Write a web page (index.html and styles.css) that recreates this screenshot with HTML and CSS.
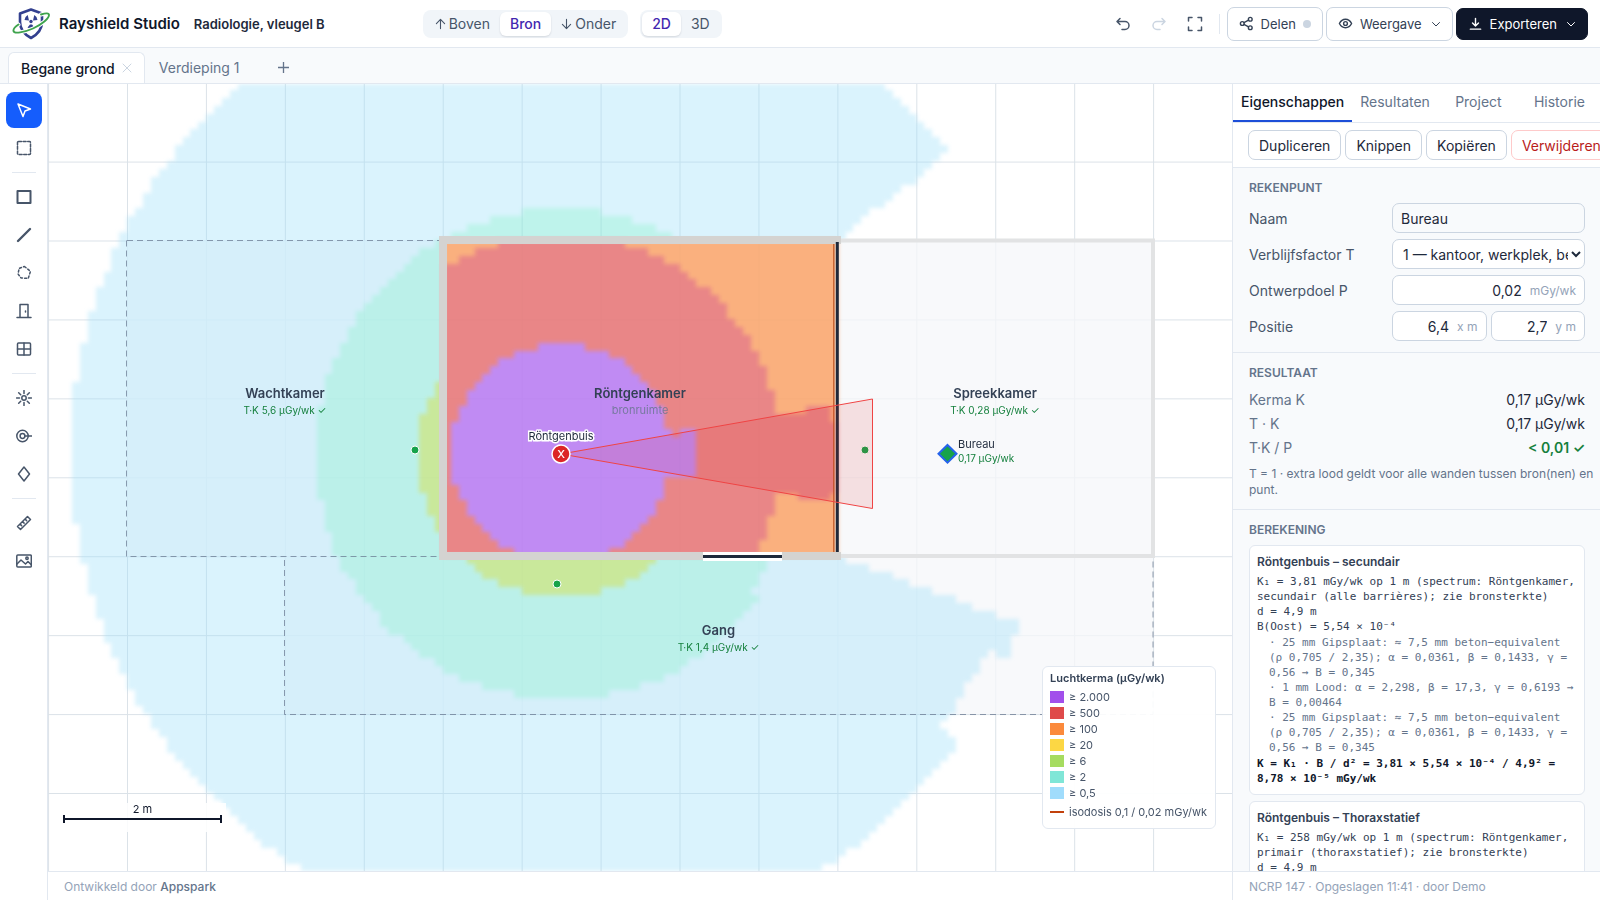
FILE: index.html
```html
<!DOCTYPE html>
<html lang="nl">
<head>
<meta charset="utf-8">
<title>Rayshield Studio</title>
<link rel="stylesheet" href="styles.css">
</head>
<body>
<div class="app">
  <header class="topbar">
    <svg class="logo" viewBox="0 0 38 32" aria-hidden="true">
      <path d="M19 1.500 30 5.500V14c0 7.500-4.500 12.500-11 16C12.500 26.500 8 21.500 8 14V5.500Z" fill="#fff" stroke="#33408f" stroke-width="2.600" stroke-linejoin="round"/>
      <g fill="#33408f"><circle cx="19" cy="13.500" r="1.700"/><path d="M17 12.500 12.500 12a6.500 6.500 0 0 1 3.200-5Z"/><path d="M21 12.500 25.500 12a6.500 6.500 0 0 0-3.200-5Z"/><path d="M18 16.500h2l2.500 3a6.500 6.500 0 0 1-7 0Z"/></g>
      <path d="M29 6.500c5-1.600 8-1.600 8 .5 0 3.500-7 9.500-16 13.500S2 26 1.500 23c-.4-2 2-4.500 5-6.500" fill="none" stroke="#fff" stroke-width="4"/>
      <path d="M29 6.500c5-1.600 8-1.600 8 .5 0 3.500-7 9.500-16 13.500S2 26 1.500 23c-.4-2 2-4.500 5-6.500" fill="none" stroke="#3fa34d" stroke-width="1.900" stroke-linecap="round"/>
    </svg>
    <strong class="brand">Rayshield Studio</strong>
    <span class="project">Radiologie, vleugel B</span>
    <div class="segments">
      <div class="segment">
        <button><svg class="arrow" viewBox="0 0 12 12"><path d="M6 11V1M1.500 5.500 6 1l4.500 4.500"/></svg>Boven</button>
        <button class="on">Bron</button>
        <button><svg class="arrow" viewBox="0 0 12 12"><path d="M6 1v10M1.500 6.500 6 11l4.500-4.500"/></svg>Onder</button>
      </div>
      <div class="segment"><button class="on">2D</button><button>3D</button></div>
    </div>
    <div class="actions">
      <button class="icon-btn" aria-label="Ongedaan maken"><svg viewBox="0 0 16 16"><path d="M5 2.500 2 5.500l3 3M2.200 5.500H10a4 4 0 0 1 0 8H7"/></svg></button>
      <button class="icon-btn off" aria-label="Opnieuw"><svg viewBox="0 0 16 16"><path d="m11 2.500 3 3-3 3M13.800 5.500H6a4 4 0 0 0 0 8h3"/></svg></button>
      <button class="icon-btn" aria-label="Passend maken"><svg viewBox="0 0 16 16"><path d="M1.500 5V1.500H5M11 1.500h3.500V5M14.500 11v3.500H11M5 14.500H1.500V11"/></svg></button>
      <span class="divider"></span>
      <button class="btn"><svg viewBox="0 0 16 16"><circle cx="3.500" cy="8" r="2"/><circle cx="12" cy="3.500" r="2"/><circle cx="12" cy="12.500" r="2"/><path d="m5.300 7 4.900-2.600M5.300 9l4.900 2.600"/></svg>Delen<i class="status"></i></button>
      <button class="btn"><svg viewBox="0 0 16 16"><path d="M1.500 8C3 5 5.300 3.500 8 3.500S13 5 14.500 8C13 11 10.700 12.500 8 12.500S3 11 1.500 8Z"/><circle cx="8" cy="8" r="2"/></svg>Weergave<svg class="caret" viewBox="0 0 10 10"><path d="m1.500 3.500 3.500 3.500 3.500-3.500"/></svg></button>
      <button class="btn dark"><svg viewBox="0 0 16 16"><path d="M8 2.500v8M4.800 7.500 8 10.700l3.200-3.200M2.500 14h11"/></svg>Exporteren<svg class="caret" viewBox="0 0 10 10"><path d="m1.500 3.500 3.500 3.500 3.500-3.500"/></svg></button>
    </div>
  </header>

  <nav class="floors">
    <div class="floor on"><button>Begane grond</button><button class="close" aria-label="Sluiten"><svg viewBox="0 0 10 10"><path d="m1 1 8 8M9 1 1 9"/></svg></button></div>
    <div class="floor"><button>Verdieping 1</button></div>
    <button class="add" aria-label="Verdieping toevoegen"><svg viewBox="0 0 10 10"><path d="M5 0v10M0 5h10"/></svg></button>
  </nav>

  <div class="body">
    <aside class="tools">
      <button class="tool on" aria-label="Selecteren"><svg viewBox="0 0 16 16"><path d="m2 2 12.500 5-5.500 2-2 5.500Z"/></svg></button>
      <button class="tool" aria-label="Gebied"><svg viewBox="0 0 16 16"><rect x="1.500" y="1.500" width="13" height="13" rx="1" stroke-dasharray="3 1.600"/></svg></button>
      <hr>
      <button class="tool" aria-label="Ruimte"><svg viewBox="0 0 16 16"><rect x="1.500" y="2" width="13" height="12" stroke-width="2"/></svg></button>
      <button class="tool" aria-label="Wand"><svg viewBox="0 0 16 16"><path d="M2 14 14 2" stroke-width="2.400"/></svg></button>
      <button class="tool" aria-label="Veelhoek"><svg viewBox="0 0 16 16"><path d="m8.500 1.500 6 4.800-2.300 7.200-7.200-.6-3-4 1.200-5.600Z" stroke-dasharray="2 2.200"/></svg></button>
      <button class="tool" aria-label="Deur"><svg viewBox="0 0 16 16"><path d="M4 14.500v-13h8v13M1 14.500h14"/><path d="M9.500 8v1"/></svg></button>
      <button class="tool" aria-label="Raam"><svg viewBox="0 0 16 16"><rect x="1.500" y="2" width="13" height="12" rx="1"/><path d="M8 2v12M1.500 8h13"/></svg></button>
      <hr>
      <button class="tool" aria-label="Bron"><svg viewBox="0 0 16 16"><circle cx="8" cy="8" r="2.200"/><path d="M8 .5v3M8 12.500v3M.5 8h3M12.500 8h3M2.700 2.700l2 2M11.300 11.300l2 2M2.700 13.300l2-2M11.300 4.700l2-2"/></svg></button>
      <button class="tool" aria-label="CT"><svg viewBox="0 0 16 16"><circle cx="6.500" cy="8" r="5.700"/><circle cx="6.500" cy="8" r="2.400"/><path d="M9 8h7"/></svg></button>
      <button class="tool" aria-label="Rekenpunt"><svg viewBox="0 0 16 16"><path d="m8 1 5.500 7L8 15 2.500 8Z"/></svg></button>
      <hr>
      <button class="tool" aria-label="Meten"><svg viewBox="0 0 16 16"><path d="M1.500 11.500 11.500 1.500l3 3-10 10ZM4 9l1.600 1.600M6.500 6.500l1.600 1.600M9 4l1.600 1.600"/></svg></button>
      <button class="tool" aria-label="Achtergrond"><svg viewBox="0 0 16 16"><rect x=".8" y="2" width="14.500" height="12" rx="1"/><path d="m1 11 4-4 4.500 4L12 8.500l3 3"/><circle cx="11" cy="5.200" r="1.200"/></svg></button>
    </aside>

    <main class="work">
      <div class="plan">
        <svg class="layer" viewBox="48 84 1184 787" preserveAspectRatio="xMidYMid slice">
          <defs><pattern id="grid" x="127" y="240.500" width="78.930" height="78.930" patternUnits="userSpaceOnUse"><path d="M0 0V79M0 0H79" fill="none" stroke="#dbe2e8" stroke-width="2"/></pattern></defs>
          <rect x="48" y="84" width="1184" height="787" fill="url(#grid)"/>
          <g fill="#f5f7fa" fill-opacity=".75">
            <rect x="127" y="240.500" width="316" height="315.500"/>
            <rect x="443" y="240.500" width="394" height="315.500"/>
            <rect x="837" y="240.500" width="316" height="315.500"/>
            <rect x="284.500" y="556" width="868.500" height="158"/>
          </g>
        </svg>
        <canvas class="layer heat" id="heat" width="1184" height="787"></canvas>
        <svg class="layer" viewBox="48 84 1184 787" preserveAspectRatio="xMidYMid slice">
          <g fill="none" stroke="#64748b" stroke-opacity=".7" stroke-dasharray="6 4">
            <path d="M127 240.500H439M126.500 240.500V556.500H439"/>
            <path d="M284.500 560V714.500H1153V560"/>
          </g>
          <path d="M841 240.500h312v315.500H841" fill="none" stroke="#e2e3e4" stroke-width="4"/>
          <path d="M841 240H443v316h398" fill="none" stroke="#d4d3d1" stroke-width="8"/>
          <path d="M834 244v308" stroke="#b8501c" stroke-width="1.500"/>
          <path d="M835.200 244v308" stroke="#fbe3d0" stroke-width="1"/>
          <path d="M837.300 242v310" stroke="#1e293b" stroke-width="3"/>
          <rect x="703" y="552" width="79" height="9" fill="#fff"/>
          <path d="M703 556.500h79" stroke="#1e293b" stroke-width="3"/>
          <g fill="#16a34a" stroke="#fff" stroke-width="1"><circle cx="415" cy="450" r="4"/><circle cx="557" cy="584" r="4"/><circle cx="865" cy="450" r="4"/></g>
          <path d="M561 454 872.500 399v109.500Z" fill="#dc2626" fill-opacity=".12" stroke="#ef4444"/>
          <circle cx="561" cy="454" r="9" fill="#dc2626" stroke="#fff" stroke-width="1.500"/>
          <path d="m947.500 445 9 8.800-9 8.800-9-8.800Z" fill="#16a34a" stroke="#2563eb" stroke-width="2"/>
          <g class="names">
            <text x="285" y="398">Wachtkamer</text>
            <text x="640" y="398">Röntgenkamer</text>
            <text x="995" y="398">Spreekkamer</text>
            <text x="718.500" y="635">Gang</text>
          </g>
          <g class="doses">
            <text x="285" y="414">T·K 5,6 µGy/wk ✓</text>
            <text class="quiet" x="640" y="414">bronruimte</text>
            <text x="995" y="414">T·K 0,28 µGy/wk ✓</text>
            <text x="718.500" y="651">T·K 1,4 µGy/wk ✓</text>
          </g>
          <text class="src" x="561" y="440">Röntgenbuis</text>
          <text class="x" x="561" y="458">X</text>
          <text class="pt" x="958" y="448">Bureau</text>
          <text class="pt ok" x="958" y="462">0,17 µGy/wk</text>
        </svg>
        <div class="scale"><span>2 m</span><i></i></div>
        <div class="legend">
          <b>Luchtkerma (µGy/wk)</b>
          <ul>
            <li><i class="c7"></i>≥ 2.000</li><li><i class="c6"></i>≥ 500</li><li><i class="c5"></i>≥ 100</li><li><i class="c4"></i>≥ 20</li><li><i class="c3"></i>≥ 6</li><li><i class="c2"></i>≥ 2</li><li><i class="c1"></i>≥ 0,5</li>
            <li class="iso"><i></i>isodosis 0,1 / 0,02 mGy/wk</li>
          </ul>
        </div>
      </div>
      <footer class="foot">Ontwikkeld door&nbsp;<a href="#">Appspark</a></footer>
    </main>

    <aside class="panel">
      <nav class="tabs"><button class="on">Eigenschappen</button><button>Resultaten</button><button>Project</button><button>Historie</button></nav>
      <div class="ops"><button>Dupliceren</button><button>Knippen</button><button>Kopiëren</button><button class="danger">Verwijderen</button></div>
      <div class="scroll">
        <section>
          <h2>REKENPUNT</h2>
          <div class="field"><label for="naam">Naam</label><div class="box soft"><input id="naam" value="Bureau"></div></div>
          <div class="field"><label for="factor">Verblijfsfactor T</label><select id="factor"><option>1 — kantoor, werkplek, bediening</option></select></div>
          <div class="field"><label for="doel">Ontwerpdoel P</label><div class="box"><input class="num" id="doel" value="0,02"><span>mGy/wk</span></div></div>
          <div class="field"><label for="px">Positie</label><div class="pair"><div class="box"><input class="num" id="px" value="6,4"><span>x m</span></div><div class="box"><input class="num" aria-label="y" value="2,7"><span>y m</span></div></div></div>
        </section>
        <section>
          <h2>RESULTAAT</h2>
          <dl><div><dt>Kerma K</dt><dd>0,17 µGy/wk</dd></div><div><dt>T · K</dt><dd>0,17 µGy/wk</dd></div><div><dt>T·K / P</dt><dd class="ok">&lt; 0,01 ✓</dd></div></dl>
          <p class="note">T = 1 · extra lood geldt voor alle wanden tussen bron(nen) en punt.</p>
        </section>
        <section>
          <h2>BEREKENING</h2>
          <article class="calc">
            <h3>Röntgenbuis – secundair</h3>
            <p>K₁ = 3,81 mGy/wk op 1 m (spectrum: Röntgenkamer, secundair (alle barrières); zie bronsterkte)</p>
            <p>d = 4,9 m</p>
            <p>B(Oost) = 5,54 × 10⁻⁴</p>
            <div class="sub">
              <p>· 25 mm Gipsplaat: ≈ 7,5 mm beton−equivalent (ρ 0,705 / 2,35); α = 0,0361, β = 0,1433, γ = 0,56 → B = 0,345</p>
              <p>· 1 mm Lood: α = 2,298, β = 17,3, γ = 0,6193 → B = 0,00464</p>
              <p>· 25 mm Gipsplaat: ≈ 7,5 mm beton−equivalent (ρ 0,705 / 2,35); α = 0,0361, β = 0,1433, γ = 0,56 → B = 0,345</p>
            </div>
            <p class="total">K = K₁ · B / d² = 3,81 × 5,54 × 10⁻⁴ / 4,9² = 8,78 × 10⁻⁵ mGy/wk</p>
          </article>
          <article class="calc">
            <h3>Röntgenbuis – Thoraxstatief</h3>
            <p>K₁ = 258 mGy/wk op 1 m (spectrum: Röntgenkamer, primair (thoraxstatief); zie bronsterkte)</p>
            <p>d = 4,9 m</p>
          </article>
        </section>
      </div>
      <footer class="foot">NCRP 147 · Opgeslagen 11:41 · door Demo</footer>
    </aside>
  </div>
</div>
<script src="heat.js"></script>
</body>
</html>
```

FILE: heat.js
```js
// Draws the dose bands on a 0.1 m raster around the tube.
(function () {
  const canvas = document.getElementById('heat');
  const w = canvas.width, h = canvas.height;
  const raster = document.createElement('canvas');
  raster.width = w;
  raster.height = h;
  const pen = raster.getContext('2d');

  const cell = 7.893;
  const room = { l: 395, t: 156, r: 789, b: 472 };
  const src = { x: 513, y: 370 };
  const door = { from: 655, to: 734 };
  const colors = {
    purple: 'rgba(162,80,238,.65)',
    red: 'rgba(225,80,80,.68)',
    orange: 'rgba(251,138,60,.66)',
    green: 'rgba(170,220,92,.6)',
    teal: 'rgba(126,232,216,.5)',
    blue: 'rgba(158,224,250,.38)'
  };

  function band(x, y) {
    const dx = x - src.x, dy = y - src.y, d = Math.hypot(dx, dy);
    if (x > room.l && x < room.r && y > room.t && y < room.b) {
      const beam = dx > 0 && Math.abs(dy) < dx * 0.178;
      if (d < (beam ? 134 : 110)) return 'purple';
      if (d < (beam ? 275 : 219)) return 'red';
      return 'orange';
    }
    const tx = dx > 0 ? (room.r - src.x) / dx : (room.l - src.x) / dx;
    const ty = dy > 0 ? (room.b - src.y) / dy : (room.t - src.y) / dy;
    if (dx > 0 && tx < ty) return null;
    let loss = 1;
    if (dy > 0 && ty < tx) {
      const hit = src.x + dx * ty;
      if (hit > door.from && hit < door.to) loss = 0.955;
    }
    if (d < 143 * loss) return 'green';
    if (d < 245 * loss) return 'teal';
    if (d < 490 * loss) return 'blue';
    return null;
  }

  const ox = room.l % cell - cell, oy = room.t % cell - cell;
  for (let j = 0; oy + j * cell < h; j++) {
    for (let i = 0; ox + i * cell < w; i++) {
      const x = ox + i * cell, y = oy + j * cell;
      const name = band(x + cell / 2, y + cell / 2);
      if (!name) continue;
      pen.fillStyle = colors[name];
      const x0 = Math.round(x), y0 = Math.round(y);
      pen.fillRect(x0, y0, Math.round(x + cell) - x0, Math.round(y + cell) - y0);
    }
  }

  const out = canvas.getContext('2d');
  out.filter = 'blur(2px)';
  out.drawImage(raster, 0, 0);
})();
```

FILE: styles.css
```css
* { box-sizing: border-box; }
body { margin: 0; font-family: Inter, "Liberation Sans", sans-serif; font-size: 14px; color: #1e293b; background: #fff; }
button, input, select { font: inherit; color: inherit; }
button { background: none; border: 0; padding: 0; margin: 0; white-space: nowrap; }
svg { fill: none; stroke: currentColor; stroke-width: 1.5; stroke-linecap: round; stroke-linejoin: round; flex: none; }
h2, h3, p, dl, dd, ul { margin: 0; padding: 0; }
.app { height: 100vh; display: flex; flex-direction: column; overflow: hidden; }

.topbar { height: 48px; flex: none; display: flex; align-items: center; padding: 0 12px; border-bottom: 1px solid #e2e8f0; }
.logo { width: 38px; height: 32px; stroke: none; }
.brand { font-size: 15px; font-weight: 600; color: #0f172a; margin-left: 9px; white-space: nowrap; }
.project { font-size: 13px; font-weight: 600; margin-left: 14px; white-space: nowrap; }
.segments { display: flex; gap: 12px; margin-left: 98px; }
.segment { display: flex; background: #f1f5f9; border-radius: 8px; padding: 2px; height: 28px; color: #475569; }
.segment button { display: flex; align-items: center; gap: 3px; padding: 0 10px; border-radius: 6px; }
.segment .on { background: #fff; color: #4327b0; font-weight: 500; box-shadow: 0 1px 2px #0f172a22; }
.arrow { width: 11px; height: 12px; stroke-width: 1.2; }
.actions { margin-left: auto; display: flex; align-items: center; gap: 3px; color: #475569; }
.icon-btn { width: 32px; height: 32px; display: grid; place-items: center; margin-right: 1px; }
.icon-btn svg { width: 16px; height: 16px; }
.off { color: #cbd5e1; }
.divider { width: 1px; height: 20px; background: #e2e8f0; margin: 0 4px; }
.btn { display: flex; align-items: center; gap: 7px; height: 34px; padding: 0 11px; border: 1px solid #cbd5e1; border-radius: 7px; color: #334155; font-size: 13px; }
.btn svg { width: 15px; height: 15px; }
.btn .caret { width: 10px; height: 10px; margin-left: 2px; stroke-width: 1; }
.btn.dark { background: #0f172a; color: #fff; border-color: #0f172a; height: 32px; }
.status { width: 8px; height: 8px; border-radius: 50%; background: #cbd5e1; }

.floors { height: 36px; flex: none; display: flex; align-items: flex-end; padding-left: 8px; background: #f8fafc; border-bottom: 1px solid #e2e8f0; }
.floor { height: 31px; display: flex; align-items: center; gap: 7px; padding: 0 14px; color: #64748b; }
.floor.on { background: #fff; border: 1px solid #e2e8f0; border-bottom: 0; border-radius: 6px 6px 0 0; color: #0f172a; font-weight: 500; padding: 0 12px; }
.close svg { width: 10px; height: 10px; display: block; color: #cbd5e1; stroke-width: 1; }
.add { height: 31px; width: 32px; margin-left: 14px; display: grid; place-items: center; color: #64748b; }
.add svg { width: 11px; height: 11px; stroke-width: 1.2; }

.body { flex: 1; min-height: 0; display: flex; }
.tools { width: 48px; flex: none; border-right: 1px solid #e2e8f0; display: flex; flex-direction: column; align-items: center; gap: 2px; padding-top: 8px; color: #475569; }
.tool { width: 36px; height: 36px; border-radius: 8px; display: grid; place-items: center; }
.tool svg { width: 16px; height: 16px; }
.tool.on { background: #155dfc; color: #fff; }
.tools hr { width: 24px; height: 1px; border: 0; background: #e2e8f0; margin: 4px 0; }
.work { flex: 1; min-width: 0; display: flex; flex-direction: column; }
.plan { position: relative; flex: 1; min-height: 0; overflow: hidden; }
.layer { position: absolute; inset: 0; width: 100%; height: 100%; stroke: none; stroke-width: 1; stroke-linecap: butt; stroke-linejoin: miter; }
.heat { object-fit: cover; }
.foot { height: 29px; flex: none; border-top: 1px solid #e2e8f0; padding: 0 16px; display: flex; align-items: center; font-size: 12px; color: #94a3b8; background: #fff; }
.foot a { color: #64748b; font-weight: 500; text-decoration: none; }

.names text { font-size: 13px; font-weight: 600; fill: #334155; text-anchor: middle; }
.doses text { font-size: 10px; fill: #15803d; text-anchor: middle; }
.doses .quiet { font-size: 11px; fill: #64748b; fill-opacity: .8; }
.src { font-size: 11px; fill: #1e293b; text-anchor: middle; stroke: #fff; stroke-width: 3px; paint-order: stroke; }
.x { font-size: 11px; font-weight: 500; fill: #fff; text-anchor: middle; }
.pt { font-size: 11px; fill: #1e293b; }
.pt.ok { fill: #15803d; font-size: 10px; }

.scale { position: absolute; left: 11px; bottom: 39px; width: 167px; height: 29px; padding: 0 4px; background: #ffffffdd; display: flex; flex-direction: column; align-items: center; font-size: 11px; color: #0f172a; line-height: 12px; }
.scale i { width: 100%; height: 8px; border: solid #0f172a; border-width: 0 2px; background: linear-gradient(#0f172a, #0f172a) center / 100% 2px no-repeat; }
.legend { position: absolute; right: 16px; bottom: 42px; padding: 4px 8px 8px 7px; background: #fffffff2; border: 1px solid #e2e8f0; border-radius: 6px; font-size: 11px; color: #475569; }
.legend b { font-weight: 600; color: #334155; display: block; height: 18px; line-height: 14px; }
.legend ul { list-style: none; }
.legend li { display: flex; align-items: center; gap: 5px; height: 16px; white-space: nowrap; }
.legend li i { width: 14px; height: 12px; }
.legend .iso { margin-top: 3px; }
.legend .iso i { height: 2px; background: #c2410c; }
.c7 { background: #a24feb; } .c6 { background: #df4a4a; } .c5 { background: #fb8a3c; } .c4 { background: #fcd744; } .c3 { background: #a6dc60; } .c2 { background: #80e6d7; } .c1 { background: #a0dcfc; }

.panel { width: 368px; flex: none; border-left: 1px solid #e2e8f0; display: flex; flex-direction: column; background: #f8fafc; }
.tabs { display: flex; height: 39px; flex: none; background: #fff; border-bottom: 1px solid #e2e8f0; }
.tabs button { flex: 1 1 0; padding: 0 8px 2px; color: #64748b; border-bottom: 2px solid transparent; }
.tabs .on { color: #0f172a; font-weight: 500; border-color: #1d4ed8; }
.ops { display: flex; gap: 4px; height: 45px; flex: none; padding: 7px 15px; background: #fff; border-bottom: 1px solid #e2e8f0; overflow: hidden; }
.ops button { flex: none; height: 30px; padding: 0 10px; border: 1px solid #cbd5e1; border-radius: 7px; }
.ops .danger { color: #b91c1c; border-color: #fecaca; }
.scroll { flex: 1; min-height: 0; overflow: hidden; }
.scroll section { padding: 12px 15px 11px 16px; border-bottom: 1px solid #e2e8f0; }
.scroll h2 { font-size: 12px; line-height: 16px; font-weight: 600; color: #64748b; margin-bottom: 7px; }
.field { display: flex; align-items: center; justify-content: space-between; height: 30px; color: #475569; margin-bottom: 6px; }
.field:last-child { margin-bottom: 0; }
.box, .field select { width: 193px; height: 30px; border: 1px solid #cbd5e1; border-radius: 7px; background: #fff; color: #1e293b; }
.box { display: flex; align-items: center; gap: 8px; padding: 0 8px; }
.box.soft { background: #f8fafc; }
.box input { flex: 1; width: 0; min-width: 0; border: 0; padding: 0; background: none; outline: 0; }
.box .num { text-align: right; }
.box span { font-size: 12px; color: #94a3b8; }
.field select { padding: 0 0 0 6px; }
.pair { display: flex; gap: 4px; width: 193px; }
.pair .box { flex: 1; min-width: 0; }
dl div { display: flex; justify-content: space-between; line-height: 24px; }
dt { color: #64748b; }
dd.ok { color: #15803d; font-weight: 600; }
.note { font-size: 12px; line-height: 16px; color: #64748b; margin: 6px -12px 0 0; }
.calc { background: #fff; border: 1px solid #e2e8f0; border-radius: 6px; padding: 8px 7px; margin: 0 0 6px; font-family: "DejaVu Sans Mono", monospace; font-size: 11px; line-height: 15px; color: #334155; }
.calc h3 { font: 600 12px/16px Inter, "Liberation Sans", sans-serif; margin-bottom: 4px; }
.calc .sub { padding-left: 12px; color: #64748b; margin: 1px 0; }
.calc .total { font-weight: 700; color: #0f172a; }
```
